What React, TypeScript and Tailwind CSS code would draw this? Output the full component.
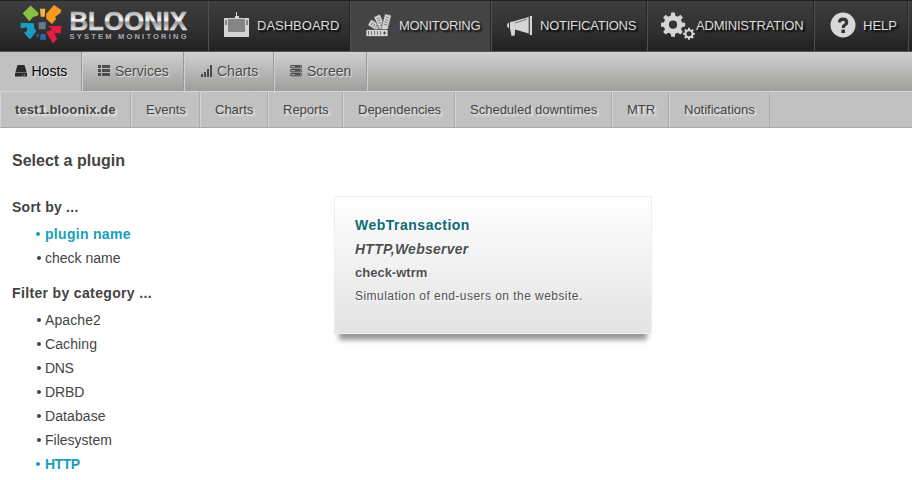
import React from "react";

const gear = (cx: number, cy: number, r: number, hole: number, teeth = 8) => {
  const pts: string[] = [];
  const step = (Math.PI * 2) / teeth;
  for (let i = 0; i < teeth; i++) {
    const a = i * step;
    const add = (rad: number, ang: number) =>
      pts.push(`${(cx + rad * Math.cos(ang)).toFixed(2)} ${(cy + rad * Math.sin(ang)).toFixed(2)}`);
    add(r * 0.76, a - step * 0.3);
    add(r, a - step * 0.19);
    add(r, a + step * 0.19);
    add(r * 0.76, a + step * 0.3);
  }
  return `M${pts.join("L")}Z M${cx - hole} ${cy}a${hole} ${hole} 0 1 0 ${hole * 2} 0a${hole} ${hole} 0 1 0 ${-hole * 2} 0Z`;
};

const Emblem = () => (
  <svg width="42" height="42" viewBox="0 0 42 42" className="shrink-0 overflow-visible">
    <path d="M2.7 8.3L10.7 0.5L18.7 8.3L17.3 11L13.3 11.7L9.3 16.3Z" fill="#8bbf42" />
    <path d="M20 3.7H25.3L24.7 11.7H20.7Z" fill="#fbb044" />
    <path d="M26 9L34 0L41.3 5L40.7 7.7L35.3 11.7L36 14.3L32 19L26.5 14Z" fill="#f8991f" />
    <path d="M0.7 17.7L14 18.3V22L0.7 23ZM4 27.7L14 22.5L16.2 26.3L10 34.5Z" fill="#169fc0" />
    <path d="M7 22H14V25L7 26.5Z" fill="#169fc0" />
    <path d="M28 21H41.3L40.7 28.3L34.5 28L37 34L33 38.5L26 27L32 24.5Z" fill="#e51b40" />
    <path d="M20.7 29H25.3L26 35L20 34.5ZM15.7 30L19.3 29L18 32.5Z" fill="#246bb2" />
    <path d="M18.7 17.2H25.7V24.2H18.7Z" fill="#6c7892" />
  </svg>
);

const Logo = () => (
  <div className="flex w-[208px] gap-[7px] pt-1 pl-5">
    <Emblem />
    <svg width="122" height="38" viewBox="0 0 122 38" className="overflow-visible">
      <defs>
        <linearGradient id="chrome" x1="0" y1="5" x2="0" y2="26" gradientUnits="userSpaceOnUse">
          <stop offset="0.1" stopColor="#b0b0b0" />
          <stop offset="0.48" stopColor="#fafafa" />
          <stop offset="0.6" stopColor="#999" />
          <stop offset="0.95" stopColor="#e6e6e6" />
        </linearGradient>
      </defs>
      <text x="0.5" y="25" textLength="117.5" lengthAdjust="spacingAndGlyphs" fill="url(#chrome)" stroke="url(#chrome)" strokeWidth="0.6" className="font-['Liberation_Sans',sans-serif] text-[25px] font-bold">BLOONIX</text>
      <text x="0.5" y="34" textLength="117" fill="#aaaab0" className="font-['Liberation_Sans',sans-serif] text-[7.5px] font-bold">SYSTEM MONITORING</text>
    </svg>
  </div>
);

const DashboardIcon = () => (
  <svg width="26" height="28" viewBox="0 0 26 28" fill="#d5d5d5" shapeRendering="crispEdges" className="relative -top-px">
    <path d="M12 1H13V5H15V7H25V26H0V7H11V5H12Z" />
    <path d="M1 9H3V14H1ZM22 9H24V14H22ZM4 8H21V21H4Z" fill="#858585" />
  </svg>
);

const SwatchIcon = () => (
  <svg width="28" height="24" viewBox="0 0 28 24" fill="#d5d5d5" className="relative -top-[0.5px] overflow-visible">
    {[-59, -25, 14].map((a) => (
      <g key={a} transform={`translate(18 17) rotate(${a})`}>
        <rect x="-3.4" y="-17" width="6.8" height="17" rx="1" stroke="#444" strokeWidth="0.6" />
        <path d="M-1.7-14H1.7M-1.7-11.5H1.7M-1.7-9H1.7M-1.7-6.5H1.7" stroke="#888" strokeWidth="1.1" />
      </g>
    ))}
    <rect x="0" y="15.5" width="22" height="7" stroke="#444" strokeWidth="0.7" />
    <path d="M2.5 17V21M5.5 17V21M8.5 17V21M11.5 17V21M14.5 17V21" stroke="#777" strokeWidth="1" />
    <path d="M17 19H20M18.5 17.5V20.5" stroke="#444" />
  </svg>
);

const MegaphoneIcon = () => (
  <svg width="26" height="22" viewBox="0 0 26 22" fill="#d5d5d5" className="relative -top-[0.5px]">
    <path d="M22.8 1H25V20H22.8ZM21.7 2V18.5L8 14.5L7.8 20.5L4.5 21L3 13.5V7L6 6.4ZM2 7.5V13L0.2 12V9Z" />
    <path d="M8 8L20 4.2" stroke="#555" strokeWidth="0.7" />
  </svg>
);

const GearsIcon = () => (
  <svg width="36" height="30" viewBox="0 0 36 30" fill="#d5d5d5" fillRule="evenodd" className="relative top-px">
    <path d={gear(12, 12.7, 12.3, 4.1)} />
    <path d={gear(28, 21.8, 6, 2.5)} />
  </svg>
);

const HelpIcon = () => (
  <svg width="26" height="26" viewBox="0 0 26 26" className="relative -top-px">
    <circle cx="13" cy="13" r="12.5" fill="#d8d8d8" />
    <path d="M9.5 10.4Q9.5 7.1 13 7.1T16.7 10.1Q16.7 12.2 14.6 13.2Q13.2 13.9 13.2 16" fill="none" stroke="#333" strokeWidth="3.1" />
    <path d="M11.4 17.6H15V21H11.4Z" fill="#333" />
  </svg>
);

const TopItem = ({ label, width, icon, text, active = false }: { label: string; width: string; icon: React.ReactNode; text: string; active?: boolean }) => (
  <div className={`flex h-[50px] shrink-0 items-center border-l border-l-[#505050] shadow-[inset_-1px_0_#242424] ${width} ${active ? "bg-[#444]" : ""}`}>
    <span className="flex shrink-0">{icon}</span>
    <span className={`whitespace-nowrap text-[13px] leading-4 text-[#dcdcdc] [text-shadow:2px_2px_2px_#000] ${text}`}>{label}</span>
  </div>
);

const HostIcon = () => (
  <svg width="12" height="12" viewBox="0 0 12 12">
    <path d="M2.5 0H9.5L11.7 7.5H0.3ZM0 8H12V11.5H0Z" fill="#292929" />
    <path d="M7 10H8M9 10H10" stroke="#bbb" />
  </svg>
);
const ListIcon = () => (
  <svg width="12" height="12" viewBox="0 0 12 12" fill="#4d4d4d" shapeRendering="crispEdges">
    <path d="M0 0H3V3H0ZM4 0H12V3H4ZM0 4H3V7H0ZM4 4H12V7H4ZM0 8H3V11H0ZM4 8H12V11H4Z" />
  </svg>
);
const BarsIcon = () => (
  <svg width="12" height="12" viewBox="0 0 12 12" fill="#4d4d4d" shapeRendering="crispEdges">
    <path d="M0 9H2V12H0ZM3 7H5V12H3ZM6 4H8V12H6ZM9 0H11V12H9Z" />
  </svg>
);
const ScreenIcon = () => (
  <svg width="12" height="12" viewBox="0 0 12 12">
    {[0, 4, 8].map((y) => (
      <g key={y}>
        <rect x="0.5" y={y + 0.5} width="11" height="2.4" rx="0.7" fill="#999" stroke="#4d4d4d" />
        <path d={`M5 ${y + 1.5}H10`} stroke="#4d4d4d" />
      </g>
    ))}
  </svg>
);

const tabs = [
  { label: "Hosts", width: "w-[82px] pl-[15px] bg-[#c1c1c1] text-black", icon: <HostIcon />, text: "ml-[4.5px]" },
  { label: "Services", width: "w-[102px] border-l pl-[15px] text-[#4a4a4a]", icon: <ListIcon />, text: "ml-[5px]" },
  { label: "Charts", width: "w-[90px] border-l pl-4 text-[#4a4a4a]", icon: <BarsIcon />, text: "ml-1" },
  { label: "Screen", width: "w-[93px] border-l pl-[15px] text-[#4a4a4a]", icon: <ScreenIcon />, text: "ml-[5px]" },
];

const hostTabs = [
  { label: "test1.bloonix.de", style: "w-[131px] font-bold tracking-[0.1px]" },
  { label: "Events", style: "w-[69px]" },
  { label: "Charts", style: "w-[68px]" },
  { label: "Reports", style: "w-[75px]" },
  { label: "Dependencies", style: "w-[112px]" },
  { label: "Scheduled downtimes", style: "w-[157px]" },
  { label: "MTR", style: "w-[57px]" },
  { label: "Notifications", style: "w-[101px]" },
];

const Item = ({ label, active = false, text = "" }: { label: string; active?: boolean; text?: string }) => (
  <li className={`flex h-6 items-center text-[14px] ${active ? "font-bold text-[#169fb9]" : "text-[#444]"}`}>
    <span className={`h-1 w-1 shrink-0 rounded-full bg-current ${active ? "mr-[5px]" : "mr-1 ml-px"}`} />
    <span className={text}>{label}</span>
  </li>
);

export default function App() {
  return (
    <div className="h-[480px] w-[912px] overflow-hidden bg-white font-['Liberation_Sans',Arial,sans-serif] text-[13px] text-[#444]">
      <header className="flex h-[52px] border-t border-b border-t-[#222] border-b-[#555] bg-linear-to-b from-[#3d3d3d] via-[#303030] via-60% to-[#202020]">
        <Logo />
        <TopItem label="DASHBOARD" width="w-[142px] pl-[15px]" icon={<DashboardIcon />} text="ml-[7px]" />
        <TopItem label="MONITORING" width="w-[141px] pl-[15px]" icon={<SwatchIcon />} text="ml-[5px] tracking-[-0.3px]" active />
        <TopItem label="NOTIFICATIONS" width="w-[156px] pl-[15px]" icon={<MegaphoneIcon />} text="ml-[7px] tracking-[-0.25px]" />
        <TopItem label="ADMINISTRATION" width="w-[167px] pl-[13px]" icon={<GearsIcon />} text="-ml-px tracking-[-0.2px]" />
        <TopItem label="HELP" width="w-[94px] pl-[15px]" icon={<HelpIcon />} text="ml-[7px]" />
        <div className="w-1 border-l border-[#505050]" />
      </header>
      <nav className="flex h-[39px] bg-linear-to-b from-[#d0d0d0] to-[#9f9e9c]">
        {tabs.map((t) => (
          <div key={t.label} className={`flex shrink-0 items-center border-[#d0d0d0] pb-px shadow-[inset_-1px_0_#999] ${t.width}`}>
            {t.icon}
            <span className={`text-[14px] leading-4 [text-shadow:1px_1px_1px_#eee] ${t.text}`}>{t.label}</span>
          </div>
        ))}
        <div className="border-l border-[#d0d0d0]" />
      </nav>
      <nav className="flex h-[37px] border-t border-b border-t-[#d5d5d5] border-b-[#aaa] bg-[#c1c1c1]">
        {hostTabs.map((t) => (
          <div key={t.label} className={`flex shrink-0 items-center border-l border-[#d5d5d5] pl-[14px] whitespace-nowrap shadow-[inset_-1px_0_#aaa] [text-shadow:2px_2px_2px_#eee] ${t.style}`}>
            {t.label}
          </div>
        ))}
      </nav>
      <main className="flex pl-3">
        <section className="w-[322px] pt-[23px]">
          <h1 className="text-[16px] leading-5 font-bold">Select a plugin</h1>
          <h2 className="mt-[26px] text-[14px] leading-5 font-bold tracking-[0.25px]">Sort by ...</h2>
          <ul className="mt-[5px] ml-6">
            <Item label="plugin name" active text="tracking-[0.3px]" />
            <Item label="check name" />
          </ul>
          <h2 className="mt-[13px] text-[14px] leading-5 font-bold tracking-[0.35px]">Filter by category ...</h2>
          <ul className="mt-[5px] ml-6">
            <Item label="Apache2" text="tracking-[0.1px]" />
            <Item label="Caching" text="tracking-[0.1px]" />
            <Item label="DNS" text="tracking-[-0.4px]" />
            <Item label="DRBD" text="tracking-[-0.1px]" />
            <Item label="Database" text="tracking-[0.1px]" />
            <Item label="Filesystem" />
            <Item label="HTTP" active text="tracking-[-0.5px]" />
          </ul>
        </section>
        <article className="mt-[68px] h-[138px] w-[318px] border border-[#eee] bg-linear-to-b from-white to-[#e3e3e3] pt-4 pl-5 text-[#505050] shadow-[0_11px_5px_-5px_#999] [text-shadow:1px_1px_1px_#fff]">
          <h3 className="text-[14px] leading-6 font-bold tracking-[0.5px] text-[#106a75]">WebTransaction</h3>
          <p className="text-[14px] leading-6 font-bold tracking-[0.25px] italic">HTTP,Webserver</p>
          <p className="text-[13px] leading-6 font-bold">check-wtrm</p>
          <p className="text-[12px] leading-[22px] tracking-[0.45px]">Simulation of end-users on the website.</p>
        </article>
      </main>
    </div>
  );
}
